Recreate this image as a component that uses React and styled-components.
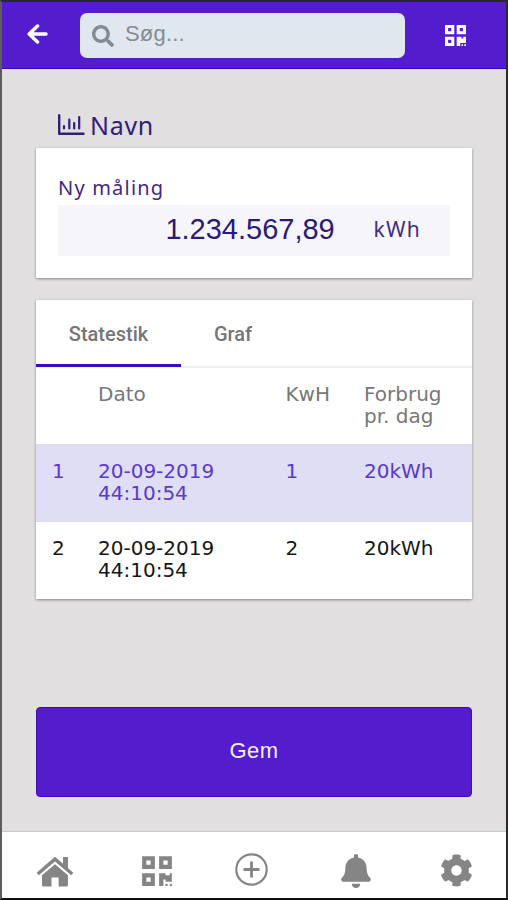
import React from "react";
import styled, { createGlobalStyle } from "styled-components";
import { FaSearch, FaQrcode, FaBell, FaCog } from "react-icons/fa";

const GlobalStyle = createGlobalStyle`
  * { box-sizing: border-box; }
  body { margin: 0; background: #e1dfe0; }
`;

const Screen = styled.div`
  width: 508px;
  height: 900px;
  display: flex;
  flex-direction: column;
  background: #e1dfe0;
  border: 2px solid #29292b;
  border-left-color: #5c5b5d;
  border-bottom-color: #111;
  overflow: hidden;
  font-family: "Liberation Sans", Arial, sans-serif;
`;

const TopBar = styled.header`
  flex: none;
  height: 67px;
  display: flex;
  align-items: flex-start;
  padding: 11px 0 0 25px;
  background: #531dcd;
  border-bottom: 1px solid #3e04b4;
  color: #fff;
`;

const IconButton = styled.button`
  flex: none;
  display: flex;
  padding: 0;
  border: 0;
  background: none;
  color: inherit;
  margin-top: ${(p) => p.$top || 0}px;
  svg {
    display: block;
    width: ${(p) => p.$w}px;
    height: ${(p) => p.$h}px;
  }
`;

const SearchBox = styled.label`
  width: 325px;
  height: 45px;
  margin: 0 40px 0 32px;
  padding: 0 12px;
  display: flex;
  align-items: center;
  gap: 11px;
  background: #e1e7ef;
  border-radius: 7px;
  color: #858b92;
  font-size: 22px;
  svg { width: 22px; height: 22px; }
  span { padding-bottom: 3px; letter-spacing: 0.2px; }
`;

const Content = styled.main`
  flex: 1;
  padding: 38px 34px 0;
`;

const Title = styled.h1`
  margin: 0 0 4px;
  height: 37px;
  padding-left: 22px;
  display: flex;
  align-items: center;
  gap: 5px;
  color: #30207b;
  font: 400 25px/37px "Noto Sans", sans-serif;
  letter-spacing: 0.7px;
  svg { width: 27px; height: 22px; margin-top: -2px; }
`;

const Card = styled.section`
  background: #fff;
  border-radius: 1px;
  box-shadow: 0 1px 3px rgba(0, 0, 0, 0.4);
`;

const MeterCard = styled(Card)`
  height: 130px;
  padding: 23px 22px 0;
  margin-bottom: 22px;
`;

const FieldLabel = styled.div`
  height: 34px;
  color: #3c2a83;
  font: 400 20px/33px "Noto Sans", sans-serif;
  letter-spacing: 1.2px;
`;

const Reading = styled.div`
  height: 51px;
  padding-right: 29px;
  display: flex;
  align-items: center;
  justify-content: flex-end;
  background: #f6f5fc;
  color: #2a1a7a;
`;

const Amount = styled.span`
  width: 171px;
  margin-right: 37px;
  font-size: 29px;
  line-height: 49px;
  height: 51px;
  white-space: nowrap;
`;

const Unit = styled.span`
  font: 400 21px/48px "Noto Sans", sans-serif;
  height: 51px;
  letter-spacing: 1.3px;
  color: #3c2f80;
`;

const Tabs = styled.div`
  height: 68px;
  display: flex;
  border-bottom: 2px solid #f0f0f1;
`;

const Tab = styled.button`
  width: ${(p) => p.$width}px;
  height: 67px;
  padding: 3px 0 0;
  border: 0;
  border-bottom: 3px solid ${(p) => (p.$active ? "#3c0ab8" : "transparent")};
  background: none;
  color: #757577;
  font: 500 20px/62px Roboto, sans-serif;
`;

const Table = styled.div`
  font: 20px/22.4px "DejaVu Sans", sans-serif;
`;

const Row = styled.div`
  height: ${(p) => p.$height || 77}px;
  padding: 15px 0 0 16px;
  display: grid;
  grid-template-columns: 46px 187.5px 78.5px 1fr;
  background: ${(p) => (p.$selected ? "#e0def4" : "#fff")};
  color: ${(p) => (p.$head ? "#777" : p.$selected ? "#583acb" : "#161616")};
  border-top: ${(p) => (p.$head ? "0" : "1px solid #dddce5")};
  span { white-space: pre-line; }
`;

const SaveButton = styled.button`
  display: block;
  width: 436px;
  height: 90px;
  margin: 108px 0 0;
  padding: 0 0 3px;
  border: 1px solid #410ab8;
  border-radius: 4px;
  background: #531dcd;
  color: #f3edff;
  font: 22px "Liberation Sans", Arial, sans-serif;
  letter-spacing: 0.4px;
`;

const BottomBar = styled.nav`
  flex: none;
  height: 67px;
  padding: 0 0 0 34px;
  display: grid;
  grid-template-columns: 105.5px 93.5px 106px 98.5px 1fr;
  align-items: start;
  background: #fff;
  border-top: 1px solid #c9c8c9;
  color: #858585;
`;

const ChartIcon = () => (
  <svg viewBox="0 0 27 22" fill="none" stroke="currentColor" strokeLinecap="round">
    <path d="M1.2 1.2V19.7H25.5" strokeWidth="2.4" strokeLinejoin="round" />
    <path d="M6 12V14.5M11.3 5.5V14.5M16.2 9V14.5M21.2 3V14.5" strokeWidth="2.2" />
  </svg>
);

const BackIcon = () => (
  <svg viewBox="0 0 21 20" fill="none" stroke="currentColor" strokeWidth="3.5" strokeLinecap="round" strokeLinejoin="round">
    <path d="M10.5 2L2.2 10L10.5 18M3 10H19" />
  </svg>
);

const ScanIcon = () => (
  <svg viewBox="0 0 21 21" fill="currentColor" fillRule="evenodd">
    <path d="M0 0H9.3V9.3H0ZM3.1 3.1V6.2H6.2V3.1Z" />
    <path d="M11.7 0H21V9.3H11.7ZM14.8 3.1V6.2H17.9V3.1Z" />
    <path d="M0 11.7H9.3V21H0ZM3.1 14.8V17.9H6.2V14.8Z" />
    <path d="M11.7 11.7H16.5V13.5H18.2V11.7H21V18H15.2V21H11.7ZM16.5 19.2H18V21H16.5ZM19.3 19.2H21V21H19.3Z" />
  </svg>
);

const HomeIcon = () => (
  <svg viewBox="0 0 38 31" fill="currentColor">
    <path d="M1.7 18L19 3.1L36.3 18" fill="none" stroke="currentColor" strokeWidth="3.4" />
    <path d="M27 1H32V14L27 9.7Z" />
    <path d="M19 8.2L32 19.2V29Q32 30.5 30.5 30.5H22.6V21.5H15.5V30.5H7.5Q6 30.5 6 29V19.2Z" />
  </svg>
);

const AddIcon = () => (
  <svg viewBox="0 0 33 33" fill="none" stroke="currentColor">
    <circle cx="16.5" cy="16.5" r="15.2" strokeWidth="2.2" />
    <path d="M16.5 8.5V24.5M8.5 16.5H24.5" strokeWidth="2.8" />
  </svg>
);

const readings = [
  { id: 1, date: "20-09-2019\n44:10:54", kwh: 1, usage: "20kWh", selected: true },
  { id: 2, date: "20-09-2019\n44:10:54", kwh: 2, usage: "20kWh" },
];

export default function App() {
  return (
    <>
      <GlobalStyle />
      <Screen>
        <TopBar>
          <IconButton $w={21} $h={20} $top={11}><BackIcon /></IconButton>
          <SearchBox><FaSearch /><span>Søg...</span></SearchBox>
          <IconButton $w={21} $h={21} $top={12}><ScanIcon /></IconButton>
        </TopBar>
        <Content>
          <Title><ChartIcon />Navn</Title>
          <MeterCard>
            <FieldLabel>Ny måling</FieldLabel>
            <Reading>
              <Amount>1.234.567,89</Amount>
              <Unit>kWh</Unit>
            </Reading>
          </MeterCard>
          <Card>
            <Tabs>
              <Tab $active $width={145}>Statestik</Tab>
              <Tab $width={104}>Graf</Tab>
            </Tabs>
            <Table>
              <Row $head $height={76}>
                <span /><span>Dato</span><span>KwH</span><span>{"Forbrug\npr. dag"}</span>
              </Row>
              {readings.map((r) => (
                <Row key={r.id} $selected={r.selected} $height={r.selected ? 77 : 78}>
                  <span>{r.id}</span><span>{r.date}</span><span>{r.kwh}</span><span>{r.usage}</span>
                </Row>
              ))}
            </Table>
          </Card>
          <SaveButton>Gem</SaveButton>
        </Content>
        <BottomBar>
          <IconButton $w={38} $h={31} $top={24}><HomeIcon /></IconButton>
          <IconButton $w={30} $h={34} $top={22}><FaQrcode /></IconButton>
          <IconButton $w={33} $h={33} $top={21}><AddIcon /></IconButton>
          <IconButton $w={30} $h={34} $top={22}><FaBell /></IconButton>
          <IconButton $w={33} $h={33} $top={22}><FaCog /></IconButton>
        </BottomBar>
      </Screen>
    </>
  );
}
